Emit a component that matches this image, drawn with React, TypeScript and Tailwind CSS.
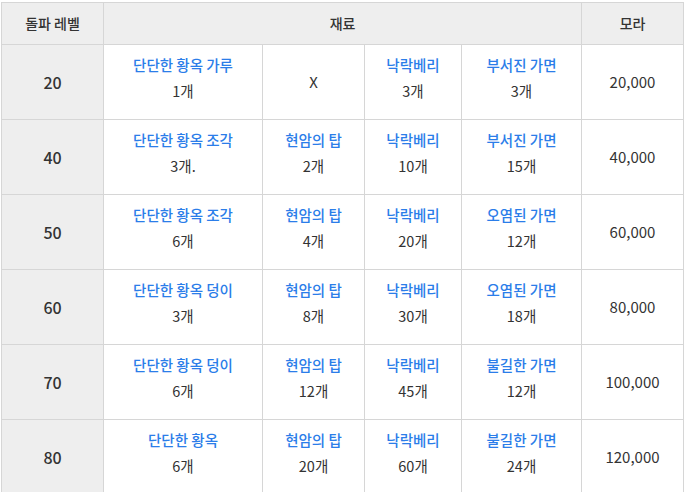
import React from "react";

type Mat = { name: string; count: string } | null;

interface Row {
  level: string;
  mats: Mat[];
  mora: string;
}

const rows: Row[] = [
  {
    level: "20",
    mats: [
      { name: "단단한 황옥 가루", count: "1개" },
      null,
      { name: "낙락베리", count: "3개" },
      { name: "부서진 가면", count: "3개" },
    ],
    mora: "20,000",
  },
  {
    level: "40",
    mats: [
      { name: "단단한 황옥 조각", count: "3개." },
      { name: "현암의 탑", count: "2개" },
      { name: "낙락베리", count: "10개" },
      { name: "부서진 가면", count: "15개" },
    ],
    mora: "40,000",
  },
  {
    level: "50",
    mats: [
      { name: "단단한 황옥 조각", count: "6개" },
      { name: "현암의 탑", count: "4개" },
      { name: "낙락베리", count: "20개" },
      { name: "오염된 가면", count: "12개" },
    ],
    mora: "60,000",
  },
  {
    level: "60",
    mats: [
      { name: "단단한 황옥 덩이", count: "3개" },
      { name: "현암의 탑", count: "8개" },
      { name: "낙락베리", count: "30개" },
      { name: "오염된 가면", count: "18개" },
    ],
    mora: "80,000",
  },
  {
    level: "70",
    mats: [
      { name: "단단한 황옥 덩이", count: "6개" },
      { name: "현암의 탑", count: "12개" },
      { name: "낙락베리", count: "45개" },
      { name: "불길한 가면", count: "12개" },
    ],
    mora: "100,000",
  },
  {
    level: "80",
    mats: [
      { name: "단단한 황옥", count: "6개" },
      { name: "현암의 탑", count: "20개" },
      { name: "낙락베리", count: "60개" },
      { name: "불길한 가면", count: "24개" },
    ],
    mora: "120,000",
  },
];

const cell = "border border-[#d6d6d6] text-center align-middle";

export default function App() {
  return (
    <div
      className="bg-white pl-[1px] pt-[2px] h-[492px] overflow-hidden text-[#333] text-[14px]"
      style={{ fontFamily: '"Noto Sans CJK KR", "Noto Sans", sans-serif' }}
    >
      <table className="table-fixed border-collapse w-[682px]">
        <colgroup>
          <col className="w-[102px]" />
          <col className="w-[159px]" />
          <col className="w-[102px]" />
          <col className="w-[97px]" />
          <col className="w-[120px]" />
          <col className="w-[102px]" />
        </colgroup>
        <thead>
          <tr className="h-[42px] bg-[#eeeeee]">
            <th className={`${cell} font-medium`}>돌파 레벨</th>
            <th className={`${cell} font-medium`} colSpan={4}>
              재료
            </th>
            <th className={`${cell} font-medium`}>모라</th>
          </tr>
        </thead>
        <tbody>
          {rows.map((r) => (
            <tr key={r.level} className="h-[75px]">
              <td className={`${cell} bg-[#eeeeee] text-[16px] font-medium`}>{r.level}</td>
              {r.mats.map((m, i) => (
                <td key={i} className={cell}>
                  {m ? (
                    <div className="flex flex-col items-center gap-[5px] leading-[21px] pb-[9px] text-[14.5px]">
                      <span className="text-[#2b7de9] font-medium">{m.name}</span>
                      <span>{m.count}</span>
                    </div>
                  ) : (
                    <span className="text-[15px]">X</span>
                  )}
                </td>
              ))}
              <td className={`${cell} text-[15px]`}>{r.mora}</td>
            </tr>
          ))}
        </tbody>
      </table>
    </div>
  );
}
